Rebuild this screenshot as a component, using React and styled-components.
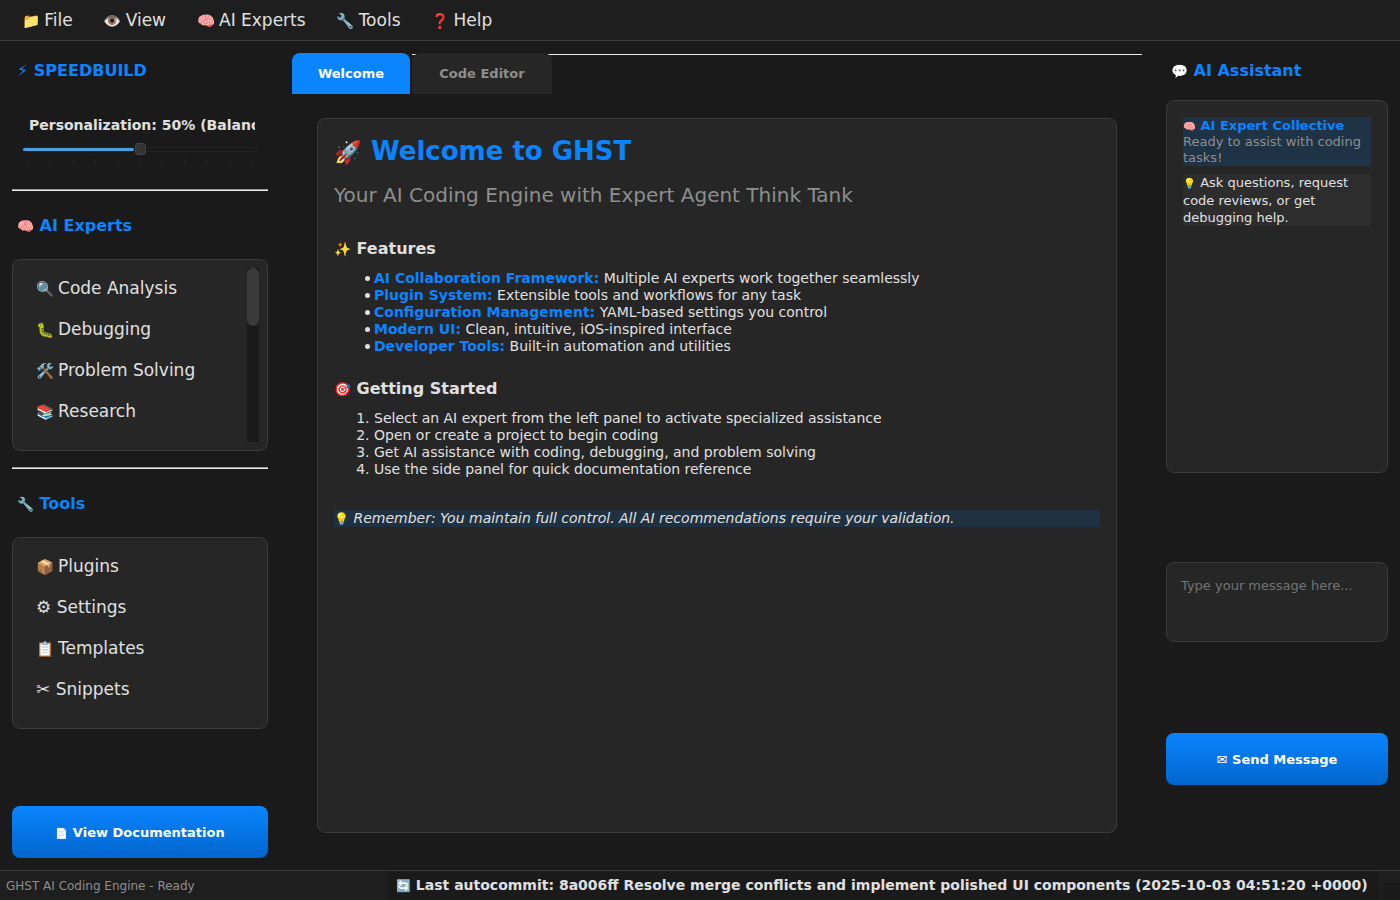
import React from 'react';
import styled, { createGlobalStyle } from 'styled-components';

const GlobalStyle = createGlobalStyle`
  html, body {
    margin: 0;
    height: 100%;
    background: #1a1a1a;
    font-family: "DejaVu Sans", sans-serif;
    color: #e0e0e0;
  }
  * { box-sizing: border-box; }
`;

const Page = styled.div`
  width: 1400px;
  height: 900px;
  display: flex;
  flex-direction: column;
  overflow: hidden;
`;

// colour emoji sit a bit smaller than the text around them
const Emoji = styled.span`
  font-size: ${p => p.$scale || 0.86}em;
  margin-right: ${p => p.$pull || 0}px;
  font-weight: 400;
  font-style: normal;
`;

const MenuBar = styled.div`
  height: 41px;
  flex: none;
  display: flex;
  align-items: center;
  padding-left: 6.5px;
  background: #1e1e1e;
  border-bottom: 1px solid #3a3a3a;
`;

const MenuItem = styled.div`
  padding: 0 15.3px;
  font-size: 17px;
  color: #e0e0e0;
  white-space: nowrap;
`;

const Body = styled.div`
  flex: 1;
  display: flex;
  min-height: 0;
`;

const LeftPanel = styled.div`
  width: 280px;
  flex: none;
  padding: 0 12px 12px;
  display: flex;
  flex-direction: column;
`;

const SectionTitle = styled.div`
  font-size: 16px;
  font-weight: 700;
  color: #0a84ff;
  margin-top: ${p => p.$top || 0}px;
  padding-left: ${p => p.$indent || 5}px;
  height: 20px;
  line-height: 20px;
  white-space: nowrap;
`;

const SliderBlock = styled.div`
  margin-top: 36px;
  padding: 0 11px;
`;

const SliderLabel = styled.div`
  font-size: 14px;
  font-weight: 700;
  line-height: 17px;
  color: #e0e0e0;
  padding-left: 6px;
  margin-right: 2px;
  white-space: nowrap;
  overflow: hidden;
`;

const SliderTrack = styled.div`
  position: relative;
  height: 5px;
  margin-top: 13px;
  background: #1a1a1a;
  border: 1px solid #222;
  border-radius: 3px;
`;

const SliderFill = styled.div`
  position: absolute;
  left: -1px;
  top: 0;
  bottom: 0;
  background: #4a9fe0;
  border-radius: 2px;
`;

const SliderHandle = styled.div`
  position: absolute;
  top: -5px;
  width: 11px;
  height: 12px;
  background: #333;
  border: 1px solid #444;
  border-radius: 3px;
`;

const Ticks = styled.div`
  display: flex;
  justify-content: space-between;
  padding: 0 5px;
  margin-top: 7px;
  height: 3px;
`;

const Tick = styled.span`
  width: 1px;
  height: 3px;
  background: #2e2e2e;
`;

const Divider = styled.div`
  height: 2px;
  flex: none;
  margin: ${p => p.$top}px 0 ${p => p.$bottom}px;
  background: #eee;
  border-top: 1px solid #999;
`;

const ListCard = styled.div`
  position: relative;
  height: 192px;
  flex: none;
  margin-top: 23px;
  padding: 8px 12px 6px;
  background: #262626;
  border: 1px solid #3a3a3a;
  border-radius: 8px;
`;

const ListItem = styled.div`
  height: 41px;
  padding-left: 11px;
  line-height: 41px;
  font-size: 17px;
  color: #e0e0e0;
  white-space: nowrap;
`;

const ScrollTrack = styled.div`
  position: absolute;
  right: 8px;
  top: 8px;
  bottom: 8px;
  width: 12px;
  background: #1a1a1a;
`;

const ScrollThumb = styled.div`
  height: 58px;
  background: #3a3a3a;
  border-radius: 6px;
`;

const Spacer = styled.div`
  flex: 1;
`;

const PrimaryButton = styled.div`
  height: 52px;
  flex: none;
  line-height: 54px;
  text-align: center;
  border-radius: 8px;
  background: linear-gradient(to bottom, #0a84ff, #0066cc);
  color: #fff;
  font-size: 13px;
  font-weight: 700;
  white-space: nowrap;
`;

const Center = styled.div`
  flex: 1;
  min-width: 0;
  padding: 12px 0 0;
  margin: 0 12px;
  display: flex;
  flex-direction: column;
`;

const TabBar = styled.div`
  position: relative;
  height: 41px;
  flex: none;
  display: flex;
  gap: 2px;
  &::before {
    content: '';
    position: absolute;
    left: 120px;
    right: 0;
    top: 1px;
    height: 1px;
    background: #eee;
  }
`;

const Tab = styled.div`
  position: relative;
  width: ${p => p.$w}px;
  display: flex;
  align-items: center;
  justify-content: center;
  border-radius: 8px 8px 0 0;
  background: ${p => (p.$active ? '#0a84ff' : '#262626')};
  color: ${p => (p.$active ? '#fff' : '#8e8e8e')};
  font-size: 13px;
  font-weight: 700;
`;

const WelcomeCard = styled.div`
  height: 715px;
  flex: none;
  margin: 24px 25px 0;
  padding: 16px;
  background: #262626;
  border: 1px solid #3a3a3a;
  border-radius: 8px;
`;

const Title = styled.div`
  font-size: 26px;
  font-weight: 700;
  line-height: 32px;
  color: #0a84ff;
  white-space: nowrap;
`;

const Subtitle = styled.div`
  margin-top: 15px;
  font-size: 20px;
  line-height: 24px;
  color: #8e8e8e;
`;

const Heading = styled.div`
  margin-top: ${p => p.$top}px;
  font-size: 16px;
  font-weight: 700;
  line-height: 20px;
  color: #e0e0e0;
  white-space: nowrap;
`;

const BulletList = styled.ul`
  margin: 11px 0 0;
  padding: 0 0 0 40px;
  list-style: none;
  font-size: 14px;
  line-height: 17px;
`;

const Bullet = styled.li`
  position: relative;
  color: #e0e0e0;
  &::before {
    content: '';
    position: absolute;
    left: -9px;
    top: 6px;
    width: 5px;
    height: 5px;
    border-radius: 50%;
    background: #e0e0e0;
  }
`;

const Strong = styled.b`
  color: #0a84ff;
`;

const NumberedList = styled.ol`
  margin: 11px 0 0;
  padding: 0 0 0 40px;
  font-size: 14px;
  line-height: 17px;
  color: #e0e0e0;
`;

const Note = styled.div`
  margin-top: 32px;
  height: 17px;
  font-size: 14px;
  line-height: 17px;
  font-style: italic;
  color: #e0e0e0;
  background: #1f3040;
  white-space: nowrap;
`;

const RightPanel = styled.div`
  width: 246px;
  flex: none;
  padding: 0 12px 0;
  display: flex;
  flex-direction: column;
`;

const ChatCard = styled.div`
  height: 373px;
  flex: none;
  margin-top: 19px;
  padding: 16px;
  background: #262626;
  border: 1px solid #3a3a3a;
  border-radius: 8px;
`;

const ChatMessage = styled.div`
  margin-bottom: 8px;
  padding-top: ${p => (p.$info ? 1 : 0)}px;
  background: ${p => (p.$info ? '#1f3347' : '#2d2d2d')};
  font-size: 13px;
  line-height: ${p => (p.$info ? 16 : 17)}px;
  color: ${p => (p.$info ? '#8e8e8e' : '#e0e0e0')};
`;

const ChatInput = styled.textarea`
  display: block;
  height: 80px;
  width: 100%;
  flex: none;
  margin-top: 89px;
  padding: 14px;
  resize: none;
  outline: none;
  background: #262626;
  border: 1px solid #3a3a3a;
  border-radius: 8px;
  color: #e0e0e0;
  font-family: inherit;
  font-size: 13px;
  line-height: 17px;
  &::placeholder { color: #737373; }
`;

const SendButton = styled(PrimaryButton)`
  margin-top: 91px;
`;

const StatusBar = styled.div`
  height: 30px;
  flex: none;
  display: flex;
  align-items: center;
  background: #1e1e1e;
  border-top: 1px solid #3a3a3a;
`;

const StatusText = styled.div`
  width: 388px;
  padding-left: 6px;
  font-size: 12px;
  color: #8e8e8e;
`;

const CommitText = styled.div`
  height: 100%;
  padding: 0 10px 0 8px;
  line-height: 29px;
  background: #1a1a1a;
  font-size: 14px;
  font-weight: 700;
  color: #e0e0e0;
  white-space: nowrap;
`;

const SizeGrip = styled.div`
  width: 17px;
  height: 17px;
  margin-left: auto;
  align-self: flex-end;
  background: #1a1a1a;
`;

const experts = [['🔍', 'Code Analysis'], ['🐛', 'Debugging'], ['🛠️', 'Problem Solving'], ['📚', 'Research']];
const tools = [['📦', 'Plugins'], ['⚙', 'Settings'], ['📋', 'Templates'], ['✂', 'Snippets']];
const menus = [['📁', 'File'], ['👁️', 'View'], ['🧠', 'AI Experts'], ['🔧', 'Tools'], ['❓', 'Help']];
const features = [
  ['AI Collaboration Framework:', 'Multiple AI experts work together seamlessly'],
  ['Plugin System:', 'Extensible tools and workflows for any task'],
  ['Configuration Management:', 'YAML-based settings you control'],
  ['Modern UI:', 'Clean, intuitive, iOS-inspired interface'],
  ['Developer Tools:', 'Built-in automation and utilities'],
];
const steps = [
  'Select an AI expert from the left panel to activate specialized assistance',
  'Open or create a project to begin coding',
  'Get AI assistance with coding, debugging, and problem solving',
  'Use the side panel for quick documentation reference',
];

// glyphs from the text font keep full size, only colour emoji shrink
const renderIcon = icon => (icon === '⚙' || icon === '✂' ? icon : <Emoji $pull={-1.4}>{icon}</Emoji>);

export default function App() {
  return (
    <Page>
      <GlobalStyle />
      <MenuBar>
        {menus.map(([icon, label]) => (
          <MenuItem key={label}><Emoji $pull={-1}>{icon}</Emoji> {label}</MenuItem>
        ))}
      </MenuBar>
      <Body>
        <LeftPanel>
          <SectionTitle $top={20}>⚡ SPEEDBUILD</SectionTitle>
          <SliderBlock>
            <SliderLabel>Personalization: 50% (Balanced)</SliderLabel>
            <SliderTrack>
              <SliderFill style={{ width: '48%' }} />
              <SliderHandle style={{ left: 111 }} />
            </SliderTrack>
            <Ticks>
              {Array.from({ length: 11 }, (_, i) => <Tick key={i} />)}
            </Ticks>
          </SliderBlock>
          <Divider $top={27} $bottom={25} />
          <SectionTitle><Emoji>🧠</Emoji> AI Experts</SectionTitle>
          <ListCard>
            {experts.map(([icon, label]) => (
              <ListItem key={label}>{renderIcon(icon)} {label}</ListItem>
            ))}
            <ScrollTrack><ScrollThumb /></ScrollTrack>
          </ListCard>
          <Divider $top={16} $bottom={25} />
          <SectionTitle><Emoji>🔧</Emoji> Tools</SectionTitle>
          <ListCard>
            {tools.map(([icon, label]) => (
              <ListItem key={label}>{renderIcon(icon)} {label}</ListItem>
            ))}
          </ListCard>
          <Spacer />
          <PrimaryButton><Emoji $scale={0.8}>📄</Emoji> View Documentation</PrimaryButton>
        </LeftPanel>
        <Center>
          <TabBar>
            <Tab $active $w={118}>Welcome</Tab>
            <Tab $w={140}>Code Editor</Tab>
          </TabBar>
          <WelcomeCard>
            <Title><Emoji>🚀</Emoji> Welcome to GHST</Title>
            <Subtitle>Your AI Coding Engine with Expert Agent Think Tank</Subtitle>
            <Heading $top={32}><Emoji>✨</Emoji> Features</Heading>
            <BulletList>
              {features.map(([k, v]) => (
                <Bullet key={k}><Strong>{k}</Strong> {v}</Bullet>
              ))}
            </BulletList>
            <Heading $top={24}><Emoji>🎯</Emoji> Getting Started</Heading>
            <NumberedList>
              {steps.map(s => <li key={s}>{s}</li>)}
            </NumberedList>
            <Note><Emoji>💡</Emoji> Remember: You maintain full control. All AI recommendations require your validation.</Note>
          </WelcomeCard>
        </Center>
        <RightPanel>
          <SectionTitle $top={20}><Emoji>💬</Emoji> AI Assistant</SectionTitle>
          <ChatCard>
            <ChatMessage $info>
              <Strong><Emoji $scale={0.8}>🧠</Emoji> AI Expert Collective</Strong><br />
              Ready to assist with coding tasks!
            </ChatMessage>
            <ChatMessage><Emoji $scale={0.8}>💡</Emoji> Ask questions, request code reviews, or get debugging help.</ChatMessage>
          </ChatCard>
          <ChatInput placeholder="Type your message here..." />
          <SendButton>✉ Send Message</SendButton>
        </RightPanel>
      </Body>
      <StatusBar>
        <StatusText>GHST AI Coding Engine - Ready</StatusText>
        <CommitText><Emoji>🔄</Emoji> Last autocommit: 8a006ff Resolve merge conflicts and implement polished UI components (2025-10-03 04:51:20 +0000)</CommitText>
        <SizeGrip />
      </StatusBar>
    </Page>
  );
}
